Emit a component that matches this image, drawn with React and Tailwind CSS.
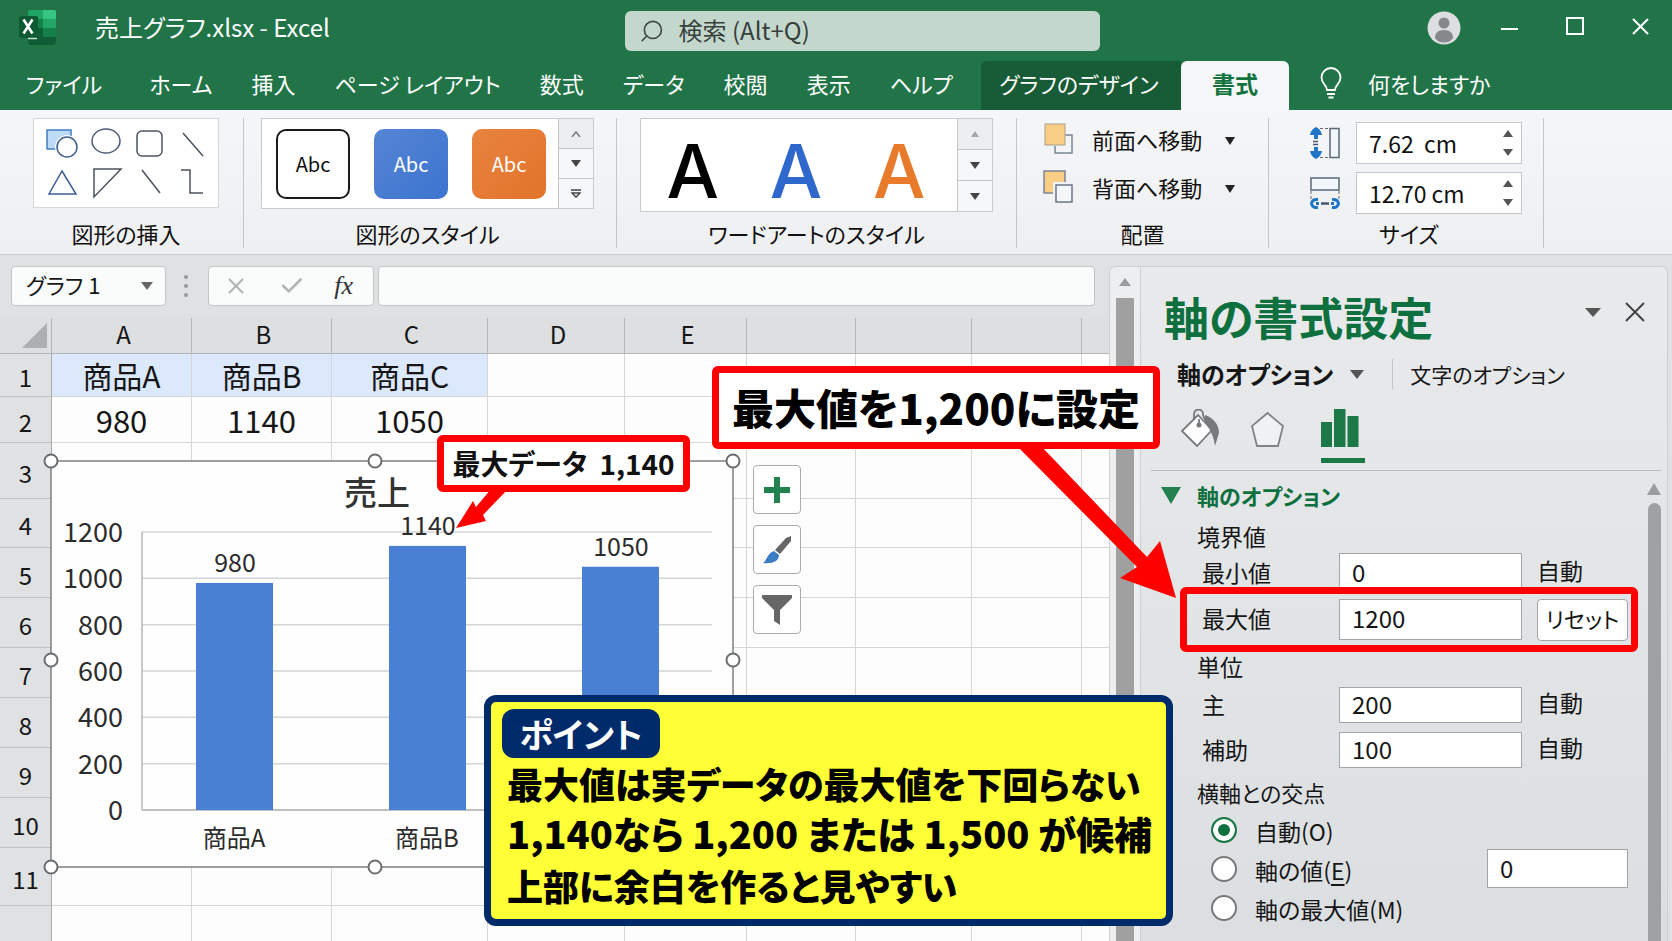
import { useState } from 'react';
import { Check, Search, X } from 'lucide-react';

const tabs = ['ファイル', 'ホーム', '挿入', 'ページ レイアウト', '数式', 'データ', '校閲', '表示', 'ヘルプ'];

const columns = [
  { name: 'A', width: 'w-[140px]' },
  { name: 'B', width: 'w-[140px]' },
  { name: 'C', width: 'w-[156px]' },
  { name: 'D', width: 'w-[137px]' },
  { name: 'E', width: 'w-[122px]' },
  { name: '', width: 'w-[109px]' },
  { name: '', width: 'w-[116px]' },
  { name: '', width: 'w-[110px]' },
  { name: '', width: '' },
];

const rows = [
  { name: '1', height: 'h-[43px]', cells: ['商品A', '商品B', '商品C'] },
  { name: '2', height: 'h-[46px]', cells: ['980', '1140', '1050'] },
  { name: '3', height: 'h-[56px]' },
  { name: '4', height: 'h-[49px]' },
  { name: '5', height: 'h-[50px]' },
  { name: '6', height: 'h-[50px]' },
  { name: '7', height: 'h-[50px]' },
  { name: '8', height: 'h-[50px]' },
  { name: '9', height: 'h-[50px]' },
  { name: '10', height: 'h-[50px]' },
  { name: '11', height: 'h-[58px]' },
  { name: '', height: 'h-[35px]' },
];

// the last category label sits under the note card, so it is left blank
const sales = [
  { label: '商品A', value: 980 },
  { label: '商品B', value: 1140 },
  { label: '', value: 1050 },
];

const wordArt = ['text-black', 'text-[#2f68cc]', 'text-[#e87a2c]'];

const Triangle = ({ up = false, className = 'w-3 h-2 text-[#444]' }) => (
  <svg viewBox="0 0 12 8" className={className} preserveAspectRatio="none" aria-hidden="true">
    <path d={up ? 'M0 8L6 0L12 8Z' : 'M0 0H12L6 8Z'} fill="currentColor" />
  </svg>
);

const ExcelLogo = () => (
  <svg viewBox="0 0 38 36" className="w-[38px] h-9" aria-hidden="true">
    <rect x="9" y="0" width="28" height="35" rx="2" fill="#1fa463" />
    <path d="M24 0H35a2 2 0 0 1 2 2V9H24Z" fill="#35c481" />
    <rect x="9" y="9" width="15" height="9" fill="#128248" />
    <rect x="24" y="9" width="13" height="9" fill="#23a566" />
    <rect x="9" y="18" width="15" height="9" fill="#0f5f36" />
    <rect x="24" y="18" width="13" height="9" fill="#15804a" />
    <path d="M9 27H37V33a2 2 0 0 1-2 2H11a2 2 0 0 1-2-2Z" fill="#115c36" />
    <rect x="0" y="6" width="19" height="22" rx="2" fill="#0e5a33" />
    <path d="M4.500 9.500L13.500 23.500M13.500 9.500L4.500 23.500" stroke="#fff" strokeWidth="2.600" />
    <path d="M9 28.500H18" stroke="#bfe3cf" strokeWidth="1.500" />
  </svg>
);

const TitleBar = () => (
  <div className="flex h-[61px] items-start pl-[19px] pr-[23px] pt-2.5 text-white">
    <ExcelLogo />
    <h1 className="ml-[38px] mt-[5px] w-[530px] whitespace-pre text-2xl leading-none">売上グラフ.xlsx - Excel</h1>
    <label className="mt-px flex h-10 max-w-[475px] flex-1 items-center gap-3.5 rounded-md bg-[#c4d7cd] pl-3.5">
      <Search className="size-7 -scale-x-100 text-[#3d4743]" strokeWidth={1.5} />
      <input
        aria-label="検索"
        placeholder="検索 (Alt+Q)"
        className="w-full bg-transparent pb-1 text-2xl leading-none outline-none placeholder:text-[#36403b]"
      />
    </label>
    <div className="ml-auto flex h-9 items-center">
      <button aria-label="アカウント" className="mr-10">
        <svg viewBox="0 0 34 34" className="size-[34px]">
          <circle cx="17" cy="17" r="16.500" fill="#dcdfe0" />
          <circle cx="17" cy="12" r="5.500" fill="#85898b" />
          <path d="M8 27c0-5 3-8 9-8s9 3 9 8c-2 3-5 4.500-9 4.500S10 30 8 27Z" fill="#85898b" />
        </svg>
      </button>
      <button aria-label="最小化" className="mr-12">
        <svg viewBox="0 0 17 17" className="size-[17px]"><path d="M0 9H17" stroke="#fff" strokeWidth="2" /></svg>
      </button>
      <button aria-label="最大化" className="mr-12 pb-1">
        <svg viewBox="0 0 18 18" className="size-[18px]"><path d="M1 1H17V17H1Z" stroke="#fff" strokeWidth="2" fill="none" /></svg>
      </button>
      <button aria-label="閉じる" className="pb-1">
        <svg viewBox="0 0 17 17" className="size-[17px]"><path d="M1 1L16 16M16 1L1 16" stroke="#fff" strokeWidth="2" /></svg>
      </button>
    </div>
  </div>
);

const Tabs = () => (
  <nav className="flex h-[49px] items-stretch text-[22px] leading-none text-white">
    <div className="flex w-[981px] items-center justify-between pb-[5px] pl-[26px] pr-7">
      {tabs.map((tab) => (
        <button key={tab} className="whitespace-nowrap first:mr-2">{tab}</button>
      ))}
    </div>
    <button className="w-[200px] whitespace-nowrap rounded-tl-md bg-[#185c37] pb-[5px] pr-1">グラフのデザイン</button>
    <button className="w-[108px] rounded-t-md bg-[#f5f6f7] pb-[5px] text-[23px] font-bold text-[#12733f]">書式</button>
    <button className="ml-[31px] flex items-center gap-[26px] whitespace-nowrap pb-[5px]">
      <svg viewBox="0 0 22 32" className="h-8 w-[22px]" fill="none" stroke="#fff" strokeWidth="1.800">
        <path d="M7 23C7 18 1.500 17 1.500 10.500A9.500 9.500 0 0 1 20.500 10.500C20.500 17 15 18 15 23Z" />
        <path d="M7 27H15M8.500 30.500H13.500" />
      </svg>
      何をしますか
    </button>
  </nav>
);

const RibbonGroup = ({ label, className, children }) => (
  <section className={`flex h-[130px] flex-col justify-between border-r border-[#c3c6c8] ${className}`}>
    {children}
    <h2 className="pb-1 text-center text-[22px] leading-none">{label}</h2>
  </section>
);

const GalleryScroll = ({ children }) => (
  <div className="flex w-[35px] flex-col divide-y divide-[#c3c6c8] border-l border-[#c3c6c8] bg-[#f6f7f8]">
    {children}
  </div>
);

const ScrollButton = ({ label, className = '', children }) => (
  <button aria-label={label} className={`flex flex-1 items-center justify-center ${className}`}>
    {children}
  </button>
);

const ShapeGallery = () => (
  <div className="w-[186px] border border-[#d5d8da] bg-white">
    <svg viewBox="0 0 184 88" className="h-[88px] w-[184px]" fill="none" stroke="#4b5260" strokeWidth="1.500">
      <rect x="13" y="11" width="24" height="19" fill="#bddaf6" stroke="#3f7fc4" />
      <circle cx="33" cy="28" r="12" fill="#fff" stroke="none" />
      <circle cx="33" cy="28" r="10" fill="#fff" stroke="#3f5f92" />
      <ellipse cx="72" cy="22" rx="14" ry="12" stroke="#4a5a78" />
      <rect x="103" y="12" width="25" height="25" rx="5" />
      <path d="M149 14L169 37" />
      <path d="M28 52L42 75H15Z" stroke="#3f5f92" />
      <path d="M60 50H87L60 78Z" />
      <path d="M108 51L126 74" />
      <path d="M147 51H156V74H169" />
    </svg>
  </div>
);

const SizeField = ({ label, defaultValue, icon }) => (
  <div className="flex items-center gap-4">
    {icon}
    <div className="flex h-[42px] w-[166px] items-center border border-[#c3c6c8] bg-white pl-3 pr-2">
      <input aria-label={label} defaultValue={defaultValue} className="min-w-0 flex-1 text-[23px] leading-none outline-none" />
      <div className="flex flex-col gap-3">
        <button aria-label={`${label}を増やす`}><Triangle up className="h-[7px] w-2.5 text-[#555]" /></button>
        <button aria-label={`${label}を減らす`}><Triangle className="h-[7px] w-2.5 text-[#555]" /></button>
      </div>
    </div>
  </div>
);

const Ribbon = () => (
  <div className="flex h-[145px] border-b border-[#c9cccf] bg-linear-to-b from-[#f5f6f7] to-[#eeeff0] pt-2 text-[#111]">
    <RibbonGroup label="図形の挿入" className="w-[244px] pl-[33px] pr-6">
      <ShapeGallery />
    </RibbonGroup>

    <RibbonGroup label="図形のスタイル" className="w-[373px] pl-[17px] pr-[22px]">
      <div className="flex h-[91px] border border-[#c9cccf] bg-white">
        <div className="flex flex-1 items-center justify-center gap-6 pl-0.5 text-xl leading-none">
          <button className="h-[70px] w-[74px] rounded-[10px] border-2 border-[#1a1a1a] bg-white">Abc</button>
          <button className="h-[70px] w-[74px] rounded-[10px] bg-linear-to-br from-[#5585d4] to-[#3c74cf] text-white">Abc</button>
          <button className="h-[70px] w-[74px] rounded-[10px] bg-linear-to-br from-[#e8833f] to-[#e2732a] text-white">Abc</button>
        </div>
        <GalleryScroll>
          <ScrollButton label="上へ" className="bg-[#eceef0]">
            <svg viewBox="0 0 10 6" className="h-1.5 w-2.5"><path d="M1 6L5 1L9 6" fill="none" stroke="#777" strokeWidth="1.500" /></svg>
          </ScrollButton>
          <ScrollButton label="下へ"><Triangle className="h-[7px] w-2.5 text-[#444]" /></ScrollButton>
          <ScrollButton label="その他">
            <svg viewBox="0 0 10 9" className="h-[9px] w-2.5"><path d="M0 1H10M1 4H9L5 8Z" fill="none" stroke="#444" strokeWidth="1.500" /></svg>
          </ScrollButton>
        </GalleryScroll>
      </div>
    </RibbonGroup>

    <RibbonGroup label="ワードアートのスタイル" className="w-[400px] pl-[23px] pr-[23px]">
      <div className="flex h-[94px] border border-[#c9cccf] bg-white">
        <div className="flex flex-1 items-center justify-around pr-1.5 pt-3 font-['Inter',sans-serif] text-[74px] font-medium leading-none">
          {wordArt.map((color) => (
            <button key={color} className={color}>A</button>
          ))}
        </div>
        <GalleryScroll>
          <ScrollButton label="上へ" className="bg-[#eceef0]"><Triangle up className="h-1.5 w-2 text-[#a5a7a9]" /></ScrollButton>
          <ScrollButton label="下へ"><Triangle className="h-[7px] w-2.5 text-[#444]" /></ScrollButton>
          <ScrollButton label="その他"><Triangle className="h-[7px] w-2.5 text-[#444]" /></ScrollButton>
        </GalleryScroll>
      </div>
    </RibbonGroup>

    <RibbonGroup label="配置" className="w-[252px]">
      <div className="flex flex-col gap-3 pl-[26px] pt-[3px] text-[22px] leading-none">
        <button className="flex h-9 items-center">
          <svg viewBox="0 0 32 34" className="h-[34px] w-8">
            <path d="M22 13H29V31H12V24" fill="none" stroke="#7b8597" strokeWidth="1.500" />
            <rect x="2" y="2" width="20" height="21" fill="#f8ce86" stroke="#a9a08c" />
          </svg>
          <span className="ml-[17px]">前面へ移動</span>
          <Triangle className="ml-[23px] mt-1 h-2 w-2.5 text-[#222]" />
        </button>
        <button className="flex h-9 items-center">
          <svg viewBox="0 0 32 34" className="h-[34px] w-8">
            <rect x="1" y="1" width="21" height="22" fill="#f8ce86" stroke="#7b8597" strokeWidth="1.500" />
            <rect x="12" y="14" width="18" height="18" fill="#eef1f5" stroke="#f0f1f2" strokeWidth="4" />
            <rect x="13" y="15" width="16" height="17" fill="#f4f6f9" stroke="#6b7687" strokeWidth="1.500" />
          </svg>
          <span className="ml-[17px]">背面へ移動</span>
          <Triangle className="ml-[23px] mt-1 h-2 w-2.5 text-[#222]" />
        </button>
      </div>
    </RibbonGroup>

    <RibbonGroup label="サイズ" className="w-[275px] pl-1.5">
      <div className="flex flex-col gap-2 pl-[35px] pt-1">
        <SizeField
          label="高さ"
          defaultValue="7.62  cm"
          icon={
            <svg viewBox="0 0 30 32" className="h-8 w-[30px]">
              <path d="M0 8C1 3 4 1 6 0C8 1 11 3 12 8H8V12H4V8ZM0 24C1 29 4 31 6 32C8 31 11 29 12 24H8V20H4V24Z" fill="#1f74c8" />
              <path d="M3 14.500H8M3 17.500H8" stroke="#47586e" strokeWidth="1.500" />
              <path d="M10 1.500H19M10 30.500H19" stroke="#667" strokeDasharray="3 2" />
              <rect x="20" y="1.500" width="9" height="29" fill="#f3f6fa" stroke="#5b6878" strokeWidth="1.500" />
            </svg>
          }
        />
        <SizeField
          label="幅"
          defaultValue="12.70 cm"
          icon={
            <svg viewBox="0 0 30 32" className="h-8 w-[30px]">
              <rect x="1" y="1" width="28" height="12" fill="#f3f6fa" stroke="#5b6878" strokeWidth="1.500" />
              <path d="M1 14V22M29 14V22" stroke="#667" strokeDasharray="3 2" />
              <path d="M8 22.500C4 22 2 24 1.500 26.500C2 29 4 31 8 30.500M22 22.500C26 22 28 24 28.500 26.500C28 29 26 31 22 30.500" fill="none" stroke="#1f74c8" strokeWidth="3" />
              <path d="M6 26.500H9M21 26.500H24" stroke="#1f74c8" strokeWidth="3" />
              <path d="M11 26.500H19" stroke="#47586e" strokeWidth="2.500" />
            </svg>
          }
        />
      </div>
    </RibbonGroup>
  </div>
);

const FormulaBar = () => (
  <div className="flex h-[63px] items-start pl-[11px] pr-3.5 pt-[11px]">
    <div className="flex h-10 w-[155px] items-center rounded-sm border border-[#c3c6c8] bg-[#fafbfb] pl-3.5 pr-3">
      <input aria-label="名前ボックス" defaultValue="グラフ 1" className="min-w-0 flex-1 pb-1 text-[22px] leading-none outline-none" />
      <button aria-label="名前の一覧"><Triangle className="h-2 w-3 text-[#666]" /></button>
    </div>
    <div className="flex h-10 w-10 flex-col items-center justify-center gap-[5px]">
      <span className="size-1 rounded-full bg-[#999]" />
      <span className="size-1 rounded-full bg-[#999]" />
      <span className="size-1 rounded-full bg-[#999]" />
    </div>
    <div className="ml-0.5 flex h-10 w-[166px] items-center justify-between rounded-sm border border-[#c3c6c8] bg-[#fafbfb] pl-3.5 pr-5">
      <button aria-label="キャンセル"><X className="size-[26px] text-[#b3b5b7]" strokeWidth={2} /></button>
      <button aria-label="入力"><Check className="size-[26px] text-[#b3b5b7]" strokeWidth={2.5} /></button>
      <button aria-label="関数の挿入" className="font-['Liberation_Serif',serif] text-[26px] italic leading-none text-[#333]">fx</button>
    </div>
    <input aria-label="数式バー" className="ml-1 h-10 min-w-0 flex-1 rounded-sm border border-[#c3c6c8] bg-[#fafbfb] px-3 text-[22px] outline-none" />
  </div>
);

const SheetGrid = () => (
  <table className="w-full table-fixed border-separate border-spacing-0">
    <thead>
      <tr className="h-9 bg-[#dddfe1] text-2xl leading-none">
        <th className="w-[52px] border-b border-r border-[#b4b7b9] p-0">
          <svg viewBox="0 0 25 25" className="ml-[22px] size-[25px]"><path d="M25 0V25H0Z" fill="#adafb1" /></svg>
        </th>
        {columns.map((column, i) => (
          <th key={i} className={`${column.width} border-b border-r border-[#b4b7b9] p-0 pb-1 pl-1 font-normal leading-none last:border-r-0`}>
            {column.name}
          </th>
        ))}
      </tr>
    </thead>
    <tbody>
      {rows.map((row, i) => (
        <tr key={i} className={`${row.height} leading-none last:[&>*]:border-b-0`}>
          <th className="border-b border-r border-b-[#bfc2c4] border-r-[#a9acae] bg-[#dfe1e3] p-0 pt-1 text-2xl font-normal leading-none">
            {row.name}
          </th>
          {columns.map((column, j) => (
            <td
              key={j}
              className={`border-b border-r border-[#d4d6d8] p-0 text-center leading-none last:border-r-0 ${
                i === 0 && j < 3 ? 'bg-[#dce8fb] text-[30px]' : 'bg-[#fdfdfd] text-[31px]'
              }`}
            >
              {row.cells?.[j]}
            </td>
          ))}
        </tr>
      ))}
    </tbody>
  </table>
);

const SalesChart = () => {
  const base = 350;
  const perUnit = 278 / 1200;
  const ticks = [0, 200, 400, 600, 800, 1000, 1200];
  const handles = [[0, 0], [324, 0], [682, 0], [0, 199], [682, 199], [0, 406], [324, 406], [682, 406]];

  return (
    <svg
      viewBox="0 0 682 407"
      className="absolute left-[51px] top-[142px] h-[407px] w-[682px] overflow-visible"
      role="img"
      aria-label="売上"
    >
      <rect x="0" y="1" width="682" height="406" fill="#fefefe" stroke="#7d8082" strokeWidth="1.500" />
      <text x="326" y="45" textAnchor="middle" fontSize="33" fontWeight="500" fill="#333">売上</text>
      {ticks.map((tick) => (
        <g key={tick}>
          <path d={`M91 ${base - tick * perUnit}H661`} stroke={tick ? '#d3d5d7' : '#a8abad'} strokeWidth="1.500" />
          <text x="72" y={base - tick * perUnit + 10} textAnchor="end" fontSize="27" fill="#2c2c2c">{tick}</text>
        </g>
      ))}
      <path d="M91 72V350" stroke="#b4b7b9" strokeWidth="1.500" />
      {sales.map((item, i) => {
        const x = 145 + i * 193;
        const top = base - item.value * perUnit;
        return (
          <g key={item.value}>
            <rect x={x} y={top} width="77" height={base - top} fill="#4a80d4" />
            <text x={x + 39} y={top - 11} textAnchor="middle" fontSize="25" fill="#2c2c2c">{item.value}</text>
            {item.label && (
              <text x={x + 38} y="387" textAnchor="middle" fontSize="24" fill="#2c2c2c">{item.label}</text>
            )}
          </g>
        );
      })}
      {handles.map(([x, y]) => (
        <circle key={`${x}-${y}`} cx={x} cy={y + 1} r="6.500" fill="#fff" stroke="#6b6e70" strokeWidth="2" />
      ))}
    </svg>
  );
};

const ChartButtons = () => (
  <div className="absolute left-[753px] top-[147px] flex flex-col gap-[11px]">
    <button aria-label="グラフ要素" className="flex h-[49px] w-12 items-center justify-center rounded-sm border border-[#a9acae] bg-white">
      <svg viewBox="0 0 26 26" className="size-[26px]"><path d="M13 0V26M0 13H26" stroke="#21814f" strokeWidth="6" /></svg>
    </button>
    <button aria-label="グラフ スタイル" className="flex h-[49px] w-12 items-center justify-center rounded-sm border border-[#a9acae] bg-white">
      <svg viewBox="0 0 30 30" className="size-[30px]">
        <path d="M29 1V6L18 19L13 15L24 3Z" fill="#666" />
        <path d="M12 16L17 20C17 26 11 29 1 28C5 26 5 18 12 16Z" fill="#3b7cc4" />
      </svg>
    </button>
    <button aria-label="グラフ フィルター" className="flex h-[49px] w-12 items-center justify-center rounded-sm border border-[#a9acae] bg-white">
      <svg viewBox="0 0 30 30" className="size-[30px]"><path d="M0 0H30V3L18 15V30L12 26V15L0 3Z" fill="#666" /></svg>
    </button>
  </div>
);

const AxisField = ({ id, label, defaultValue, height, children }) => (
  <div className={`flex items-center pl-[5px] ${height}`}>
    <label htmlFor={id} className="w-[137px] pb-0.5">{label}</label>
    <input
      id={id}
      defaultValue={defaultValue}
      className="mr-[15px] h-full w-[183px] border border-[#a3a6a8] bg-white pb-1 pl-3 text-2xl leading-none outline-none"
    />
    {children}
  </div>
);

const AxisPane = () => {
  const [cross, setCross] = useState('auto');

  const options = [
    { value: 'auto', label: '自動(O)' },
    { value: 'value', label: <>軸の値(<u className="underline-offset-4">E</u>)</> },
    { value: 'max', label: '軸の最大値(M)' },
  ];

  return (
    <aside className="mr-1 mt-[11px] flex w-[528px] flex-col rounded-tr-md border-l border-r border-t border-[#cdd0d2] bg-linear-to-b from-[#e8eaeb] to-[#dcdfe1]">
      <div className="flex h-[88px] items-start pl-[23px] pr-[22px] pt-[27px]">
        <h2 className="text-[45px] font-bold leading-none text-[#0f703f]">軸の書式設定</h2>
        <div className="ml-auto mt-2 flex items-center gap-6">
          <button aria-label="ウィンドウのオプション"><Triangle className="h-[9px] w-4 text-[#555]" /></button>
          <button aria-label="閉じる">
            <svg viewBox="0 0 20 20" className="size-5"><path d="M1 1L19 19M19 1L1 19" stroke="#444" strokeWidth="2" /></svg>
          </button>
        </div>
      </div>

      <div className="flex h-[38px] items-center pl-9 leading-none">
        <button className="flex items-center gap-[17px] whitespace-nowrap text-2xl font-bold leading-none">
          軸のオプション
          <Triangle className="h-[9px] w-3.5 text-[#555]" />
        </button>
        <span className="ml-7 mr-[17px] h-[30px] w-px bg-[#c3c6c8]" />
        <button className="whitespace-nowrap text-[21px] leading-none">文字のオプション</button>
      </div>

      <div className="ml-2.5 mr-1.5 flex h-[78px] items-start border-b border-[#b9bcbe] pl-[30px] pt-4">
        <button aria-label="塗りつぶしと線">
          <svg viewBox="0 0 39 38" className="h-[38px] w-[39px]">
            <path d="M1 22L17 6L31 21L16 37Z" fill="#fdfdfd" stroke="#777a7c" strokeWidth="1.800" />
            <path d="M24 6C33 9 38 16 38 24L34 37C33 30 31 22 24 14Z" fill="#777a7c" />
            <path d="M13 11V6C13 -1 22 -1 22 5C22 9 25 12 29 18M18 10V16" fill="none" stroke="#777a7c" strokeWidth="1.800" />
            <circle cx="18" cy="16" r="2.500" fill="#777a7c" />
          </svg>
        </button>
        <button aria-label="効果" className="ml-[31px] mt-[3px]">
          <svg viewBox="0 0 33 35" className="h-[35px] w-[33px]"><path d="M16.500 1L32 14L27 34H6L1 14Z" fill="#eef2f3" stroke="#808385" strokeWidth="1.800" /></svg>
        </button>
        <button aria-label="軸のオプション" className="ml-[37px] flex w-11 flex-col gap-[11px] border-b-[5px] border-[#1c7846] pb-[11px]">
          <svg viewBox="0 0 38 38" className="size-[38px]"><path d="M0 13H11V38H0ZM13 0H24.500V38H13ZM26.500 7H37.500V38H26.500Z" fill="#1c7846" /></svg>
        </button>
      </div>

      <div className="flex flex-1 pr-1.5">
        <div className="flex-1 pl-5 text-[23px] leading-none">
          <button className="flex h-[50px] items-center gap-4 whitespace-nowrap pb-0.5 text-[22px] font-bold leading-none text-[#0f703f]">
            <Triangle className="h-[17px] w-5 text-[#21814f]" />
            軸のオプション
          </button>
          <div className="pl-9">
            <h3 className="flex h-8 items-center pb-0.5">境界値</h3>
            <AxisField id="axis-min" label="最小値" defaultValue="0" height="h-10">
              <span className="pb-1.5">自動</span>
            </AxisField>
            <div className="relative py-1.5">
              <AxisField id="axis-max" label="最大値" defaultValue="1200" height="h-[41px]">
                <button className="h-[42px] w-[91px] whitespace-nowrap rounded-sm border border-[#a3a6a8] bg-white pb-1 text-[22px] leading-none">
                  リセット
                </button>
              </AxisField>
              <div className="absolute -left-[17px] -top-1.5 z-20 h-[65px] w-[458px] rounded-md border-[7px] border-[#fe0000]" />
            </div>
            <h3 className="flex h-[41px] items-center">単位</h3>
            <AxisField id="axis-major" label="主" defaultValue="200" height="h-9">
              <span className="pb-1.5">自動</span>
            </AxisField>
            <div className="pt-[9px]">
              <AxisField id="axis-minor" label="補助" defaultValue="100" height="h-9">
                <span className="pb-1.5">自動</span>
              </AxisField>
            </div>
            <h3 className="flex h-[42px] items-end pb-[7px] text-[22px] leading-none">横軸との交点</h3>
            <fieldset>
              {options.map((option) => (
                <div key={option.value} className="flex h-[39px] items-center pl-3.5">
                  <label className="flex flex-1 items-center gap-[18px]">
                    <input
                      type="radio"
                      name="cross"
                      checked={cross === option.value}
                      onChange={() => setCross(option.value)}
                      className="size-[26px] appearance-none rounded-full border-2 border-[#77797b] bg-white checked:border-[#1c7846] checked:bg-[#0f703f] checked:shadow-[inset_0_0_0_5px_white]"
                    />
                    <span className="pt-1">{option.label}</span>
                  </label>
                  {option.value === 'value' && (
                    <input
                      aria-label="軸の値"
                      defaultValue="0"
                      className="mr-[19px] h-[39px] w-[141px] border border-[#a3a6a8] bg-white pb-0.5 pl-3 text-2xl leading-none outline-none"
                    />
                  )}
                </div>
              ))}
            </fieldset>
          </div>
        </div>
        <div className="flex w-3.5 flex-col items-center gap-2 pt-3">
          <Triangle up className="h-3 w-3.5 text-[#999c9e]" />
          <div className="w-[13px] flex-1 rounded-t-full bg-[#9fa2a4]" />
        </div>
      </div>
    </aside>
  );
};

const Annotations = () => (
  <>
    {/* max data callout, pinned to the sheet */}
    <svg viewBox="0 0 60 44" className="absolute left-[454px] top-[231px] h-11 w-[60px]">
      <path d="M2 42L19 15L22 21L38 2H55L29 29L32 35Z" fill="#fe0000" />
    </svg>
    <div className="absolute left-[437px] top-[180px] flex h-[57px] w-[253px] items-center justify-center gap-3 whitespace-nowrap rounded-md border-[7px] border-[#fe0000] bg-white pb-0.5 text-[28px] font-bold leading-none text-[#111]">
      <span>最大データ</span>
      <span>1,140</span>
    </div>

    {/* max setting callout, pinned to the pane */}
    <svg viewBox="0 0 170 160" className="absolute right-[492px] top-[185px] z-20 h-40 w-[170px]">
      <path d="M6 5H30L137 117L150 101L166 158L110 138L127 127Z" fill="#fe0000" />
    </svg>
    <div className="absolute right-[512px] top-[111px] z-20 flex h-[83px] w-[448px] items-center justify-center whitespace-nowrap rounded-md border-[7px] border-[#fe0000] bg-white pb-0.5 text-[42px] font-black leading-none text-black">
      最大値を1,200に設定
    </div>

    <div className="absolute right-[499px] top-[440px] z-10 h-[231px] w-[689px] rounded-xl border-[7px] border-[#002b6b] bg-[#ffff36] pl-4 pt-[7px] text-black">
      <strong className="-ml-[5px] flex h-[49px] w-[158px] items-center justify-center rounded-xl bg-[#002b6b] text-[34px] font-bold leading-none text-white">
        ポイント
      </strong>
      <div className="font-black">
        <p className="whitespace-pre text-[36px] leading-[50px]">最大値は実データの最大値を下回らない</p>
        <p className="whitespace-pre text-[38px] leading-[50px]">1,140なら 1,200 または 1,500 が候補</p>
        <p className="whitespace-pre text-[36px] leading-[54px]">上部に余白を作ると見やすい</p>
      </div>
    </div>
  </>
);

const App = () => (
  <div className="flex min-h-screen flex-col overflow-hidden bg-[#dfe1e3] font-['Noto_Sans_CJK_JP',sans-serif] text-[#161616] [font-feature-settings:'palt']">
    <header className="bg-[#217448]">
      <TitleBar />
      <Tabs />
    </header>
    <Ribbon />
    <main className="relative flex flex-1">
      <div className="min-w-0 flex-1">
        <FormulaBar />
        <div className="relative">
          <SheetGrid />
          <SalesChart />
          <ChartButtons />
        </div>
      </div>
      <div className="mt-[11px] flex w-[31px] flex-col items-center gap-3 rounded-tl-md border-l border-t border-[#cdd0d2] bg-[#eceeef] pt-[11px]">
        <Triangle up className="h-2 w-3 text-[#999c9e]" />
        <div className="w-[18px] flex-1 bg-[#a0a0a0]" />
      </div>
      <AxisPane />
      <Annotations />
    </main>
  </div>
);

export default App;
